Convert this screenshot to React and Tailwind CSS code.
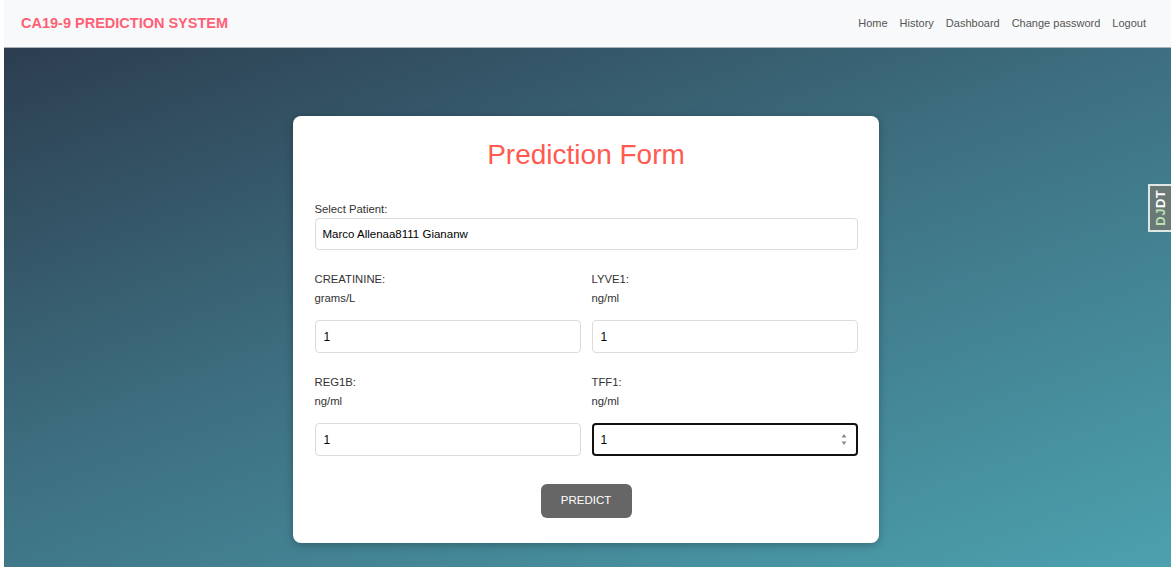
import React from 'react';

const links = ['Home', 'History', 'Dashboard', 'Change password', 'Logout'];

const Field = ({ label, unit, value, focused }) => (
  <div className="flex flex-col">
    <div className="text-[11.3px] leading-[14px] text-[#333]">{label}</div>
    <div className="mt-[5px] text-[11.3px] leading-[14px] text-[#333]">{unit}</div>
    <div className="relative mt-[15px]">
      <input
        readOnly
        value={value}
        className={
          focused
            ? 'w-full h-[33px] rounded-[4px] border-[2px] border-[#111] px-[7px] text-[12px] text-black outline-none'
            : 'w-full h-[33px] rounded-[4px] border border-[#dcdcdc] px-[8px] text-[12px] text-black outline-none'
        }
      />
      {focused && (
        <svg className="absolute right-[11px] top-[10px]" width="6" height="13" viewBox="0 0 6 13">
          <path d="M3 1 L5.5 4.5 L0.5 4.5 Z" fill="#8a8a8a" />
          <path d="M3 12 L5.5 8.5 L0.5 8.5 Z" fill="#8a8a8a" />
        </svg>
      )}
    </div>
  </div>
);

export default function App() {
  return (
    <div className="min-h-screen bg-white pl-[4px] font-['Liberation_Sans',Arial,sans-serif]">
      <div className="flex min-h-[567px] flex-col">
        <nav className="flex h-[48px] items-center justify-between border-b border-[#a9b2b8] bg-[#f8f9fa] pl-[17px] pr-[25px]">
          <div className="text-[14.5px] font-bold text-[#ff5f75]">CA19-9 PREDICTION SYSTEM</div>
          <div className="flex items-center gap-[12px] text-[11px] text-[#555]">
            {links.map((l) => (
              <a key={l} href="#">{l}</a>
            ))}
          </div>
        </nav>
        <main className="relative flex flex-1 justify-center bg-[linear-gradient(160deg,#2c3e50_0%,#3d6f80_45%,#4ca1af_100%)] pt-[68px] pr-[4px] pb-[24px]">
          <div className="h-fit w-[586px] rounded-[8px] bg-white pl-[22px] pr-[21px] pt-[23px] pb-[25px] shadow-[0_2px_8px_rgba(0,0,0,0.25)]">
            <h1 className="text-center text-[28px] leading-[32px] text-[#ff5a4f]">Prediction Form</h1>
            <div className="mt-[31px] text-[11.3px] leading-[14px] text-[#333]">Select Patient:</div>
            <input
              readOnly
              value="Marco Allenaa8111 Giananw"
              className="mt-[2px] h-[32px] w-full rounded-[4px] border border-[#dcdcdc] px-[7px] text-[11.5px] text-black outline-none"
            />
            <div className="mt-[22px] grid grid-cols-2 gap-x-[11px] gap-y-[22px]">
              <Field label="CREATININE:" unit="grams/L" value="1" />
              <Field label="LYVE1:" unit="ng/ml" value="1" />
              <Field label="REG1B:" unit="ng/ml" value="1" />
              <Field label="TFF1:" unit="ng/ml" value="1" focused />
            </div>
            <div className="mt-[28px] flex justify-center">
              <button className="h-[34px] w-[91px] rounded-[6px] bg-[#666] text-[11.5px] text-white">PREDICT</button>
            </div>
          </div>
          <div className="absolute right-0 top-[136px] flex h-[48px] w-[23px] items-center justify-center border-[2px] border-r-0 border-[#dfe6e6] bg-[#6b7878]">
            <span className="-rotate-90 whitespace-nowrap text-[13px] font-bold tracking-[0.5px]">
              <span className="text-[#b9e3b3]">DJ</span>
              <span className="text-white">DT</span>
            </span>
          </div>
        </main>
      </div>
    </div>
  );
}
